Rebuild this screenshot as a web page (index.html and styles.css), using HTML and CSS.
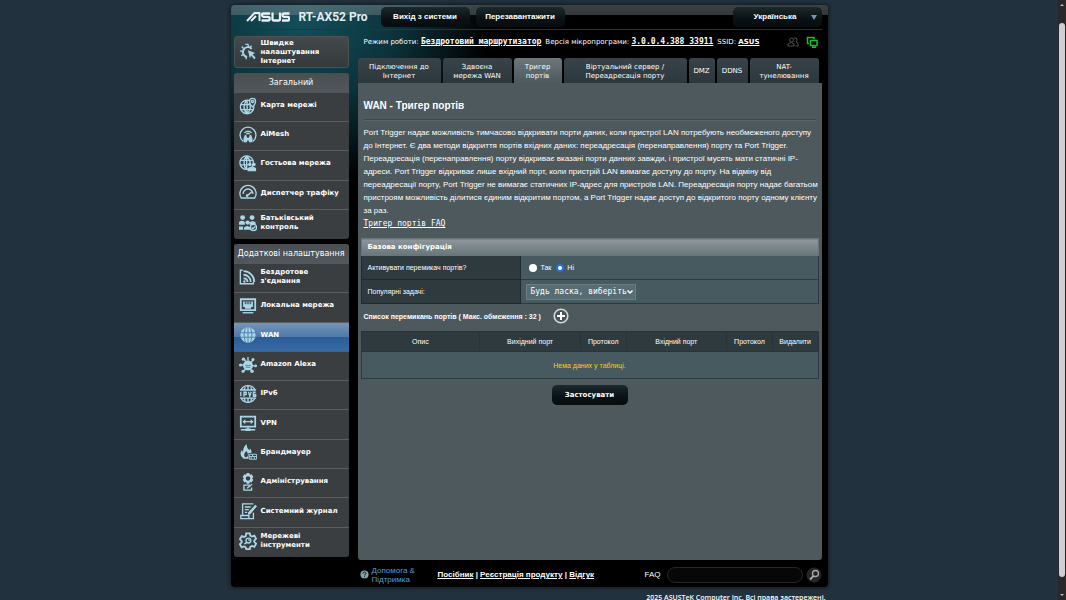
FILE: index.html
```html
<!DOCTYPE html>
<html lang="uk">
<head>
<meta charset="utf-8">
<meta name="viewport" content="width=device-width, initial-scale=1">
<title>RT-AX52 Pro - Тригер портів</title>
<link rel="stylesheet" href="styles.css">
</head>
<body>
<div class="page">
<div class="router">
  <header class="topbar">
    <svg class="logo" viewBox="0 0 44 10" role="img" aria-label="ASUS"><g fill="none" stroke="#e8f0f2" stroke-width="2.300"><path d="M1 9 8.500 1H14M5 9l5-5M13.500 .500V9" stroke-width="2"/><path d="M24 1.500h-6.500q-1.500 0-1.500 1.500t1.500 1.900h4.500q1.700 0 1.700 1.800T22 8.500h-6.500"/><path d="M26.500 .500V7q0 1.500 1.500 1.500h4.500Q34 8.500 34 7V.500"/><path d="M43.500 1.500H38Q36.500 1.500 36.500 3T38 4.900h3.700q1.500 0 1.500 1.800t-1.500 1.800H36"/></g></svg>
    <strong class="model">RT-AX52 Pro</strong>
    <button class="dark-button" type="button">Вихід з системи</button>
    <button class="dark-button" type="button">Перезавантажити</button>
    <button class="dark-button language" type="button">Українська <span class="caret"></span></button>
  </header>
  <div class="columns">
    <nav class="sidebar">
      <a class="menu-item quick" href="#"><svg viewBox="0 0 20 20"><path d="M14 6.500A5.500 5.500 0 1 0 9 15.500" stroke-width="2.200"/><path d="M7 1.500h3l.500 2.500M3 4l2 2M1 9h3M2.500 14l2.500-1.500M8 18v-2.500M14 3l-1.500 2"/><path d="m10 8 8 3-3 1.500 3.500 4-1.500 1.500-3.500-4-1.500 3z" class="fill"/></svg><span>Швидке налаштування Інтернет</span></a>
      <section class="menu">
        <h2>Загальний</h2>
        <div class="menu-list general">
          <a class="menu-item" href="#"><svg viewBox="0 0 20 20"><circle cx="9" cy="11" r="7.500"/><path d="M9 3.500c-4.500 4-4.500 11 0 15 4.500-4 4.500-9 2-12M9 3.500v15M2 8.500h10M2 14h14"/><path class="pin" d="M15 11c-5-5-4-9.500 0-9.500s5 4.500 0 9.500z"/><circle cx="15" cy="5" r="1.200"/></svg><span>Карта мережі</span></a>
          <a class="menu-item" href="#"><svg viewBox="0 0 20 20"><path d="M4.500 17A8.800 8.800 0 1 1 15.500 17M6 7.500q4-3.500 8 0M8 9q2-1.500 4 0"/><path class="fill" d="M5 18v-4l1.500-4h1.500l1 3h2l1-3h1.500l1.500 4v4h-4v-2H9v2z"/></svg><span>AiMesh</span></a>
          <a class="menu-item" href="#"><svg viewBox="0 0 20 20"><circle cx="8.500" cy="8.500" r="7.500"/><path d="M8.500 1c-4 4-4 11 0 15M8.500 1c4 4 4 7 4 8M8.500 1v15M1.500 6h14M1 11h9"/><circle class="fill" cx="12" cy="10.500" r="2"/><circle class="fill" cx="16.500" cy="10.500" r="2"/><path class="fill" d="M9.500 18v-3q2-3 4.500-1 3-2 5 1v3z"/></svg><span>Гостьова мережа</span></a>
          <a class="menu-item" href="#"><svg viewBox="0 0 20 20"><path d="M2.500 15.500A9 9 0 1 1 17.500 15.500zM4.500 11a5.500 5.500 0 0 1 11 0M9 13l5-4"/><circle class="fill" cx="9" cy="13" r="1.500"/></svg><span>Диспетчер трафіку</span></a>
          <a class="menu-item" href="#"><svg viewBox="0 0 20 20"><circle class="fill" cx="4" cy="4" r="2.700"/><circle class="fill" cx="14.500" cy="4" r="2.700"/><circle class="fill" cx="9.500" cy="9.500" r="2.400"/><path class="fill" d="M0 12V9q3-3 6.500 0v3zM11.500 9.500q3.500-3 7 0v2.500h-7zM5.500 17.500V15q3.500-3.500 7 0v2.500zM0 17.500V14h4.500v3.500z"/><circle class="pin" cx="16" cy="15" r="3.500"/><path d="m14 15 1.500 1.500L18 14"/></svg><span>Батьківський контроль</span></a>
        </div>
      </section>
      <section class="menu">
        <h2>Додаткові налаштування</h2>
        <div class="menu-list advanced">
          <a class="menu-item" href="#"><svg viewBox="0 0 20 20"><path d="M4 2.500H1.500v15H16v-2"/><path class="bars" d="M5 3.500A12 12 0 0 1 17 15.500M5 7.500A8 8 0 0 1 13 15.500M5 11.500A4 4 0 0 1 9.500 15.500"/><circle class="fill" cx="6" cy="15" r="1.300"/></svg><span>Бездротове з'єднання</span></a>
          <a class="menu-item" href="#"><svg viewBox="0 0 20 20"><path class="bars" d="M2 2.500h16v12H2z"/><path class="fill" d="M4.500 5h11v6h-2v2h-7v-2h-2z"/><path class="slots" d="M7 5v3M9 5v3M11 5v3M13 5v3"/><path d="M4 17.500h12"/></svg><span>Локальна мережа</span></a>
          <a class="menu-item active" href="#" aria-current="page"><svg viewBox="0 0 20 20"><circle class="fill" cx="10" cy="10" r="8.500"/><path class="cut" d="M10 1v18M1 7.500h18M1 12.500h18M7 2Q4 10 7 18M13 2q3 8 0 16"/></svg><span>WAN</span></a>
          <a class="menu-item" href="#"><svg viewBox="0 0 20 20"><path d="m6 4 2 3M15 5l-2 3M1 10h5M15 11h4M5 17l3-3M14 16l-2-2M10 1v4"/><circle class="fill" cx="10" cy="10.500" r="5.500"/><g class="fill"><circle cx="5" cy="3.500" r="1.900"/><circle cx="15.500" cy="4" r="1.700"/><circle cx="1.700" cy="10" r="1.700"/><circle cx="18.500" cy="11" r="1.500"/><circle cx="4.500" cy="17" r="1.700"/><circle cx="14.500" cy="17" r="1.900"/></g><path class="cut" d="M7 10.500h6M7.500 12.500h5"/></svg><span>Amazon Alexa</span></a>
          <a class="menu-item" href="#"><svg viewBox="0 0 20 20"><path d="M2 6A8.700 8.700 0 0 1 18 6M2 14A8.700 8.700 0 0 0 18 14M1 5.500h18M1 14.500h18M10 1.500v4M10 14.500v4M7 2.500l-1.500 3M13 2.500l1.500 3M5.500 14.500l1.500 3M14.500 14.500l-1.500 3"/><path d="M2 7.500v5M5.500 13V8H8v2.500H5.500M10.500 7.500l1.500 5 1.500-5M18.500 8H16v4.500h2.500v-2H16"/></svg><span>IPv6</span></a>
          <a class="menu-item" href="#"><svg viewBox="0 0 20 20"><path class="bars" d="M2 3h16v11H2z"/><path d="M10 14v3M2 17.500h16M5 8.500h10"/><path class="fill" d="M4 8.500 7 5.500v6zM16 8.500l-3-3v6zM7 16h6v3H7z"/></svg><span>VPN</span></a>
          <a class="menu-item" href="#"><svg viewBox="0 0 20 20"><path class="fill" fill-rule="evenodd" d="M5 17.500Q-.500 13 3 8l1.500 2Q4.500 4 8.500 1q-.500 4 3 7l1-2q2 3 1 5h-3v6.500zM8 9q-3 3-2 5.500Q7 17 9.500 15 11 12 8 9z"/><path d="M11.500 12.500h8v5.500h-8zM11.500 15h8M15 12.500V15M17 15v3M13.500 15v3" stroke-width="1"/></svg><span>Брандмауер</span></a>
          <a class="menu-item" href="#"><svg viewBox="0 0 20 20"><path class="fill" fill-rule="evenodd" d="M8.500 0h3l.500 2 2-.500 2 3-1.500 1.500L16 7.500 14 10.500l-2-.500-.500 2h-3L8 10l-2 .500-2-3L5.500 6 4 4.500l2-3L8 2zM10 3.500a2.500 2.500 0 1 0 .100 0z"/><path d="M12 13.500H5.500V19h8.500v-3M9 17l5.500-4.500"/></svg><span>Адміністрування</span></a>
          <a class="menu-item" href="#"><svg viewBox="0 0 20 20"><path d="M16 2H4v13M2 15h9v3.500H2zM11 18.500h5V12M6.500 5.500H13M6.500 8.500H11M6.500 11.500H9"/><path class="fill" d="m18 3 2 1.700-7.500 8.800-2.800 1 .600-3z"/></svg><span>Системний журнал</span></a>
          <a class="menu-item" href="#"><svg viewBox="0 0 20 20"><path class="bars" d="M8 1.500h4l.500 2.500 2 1 2.500-1 2 3.500-2 2v1.500l2 2-2 3.500-2.500-1-2 1-.500 2.500H8L7.500 17l-2-1-2.500 1-2-3.500 2-2V10l-2-2L3 4.500l2.500 1 2-1z"/><circle cx="10.500" cy="9.500" r="2.700"/><path d="m8.500 11.500-2.500 2M10 9h2"/></svg><span>Мережеві інструменти</span></a>
        </div>
      </section>
    </nav>
    <div class="content">
      <div class="status">
        <span>Режим роботи: <a class="mono" href="#">Бездротовий маршрутизатор</a></span>
        <span>Версія мікропрограми: <a class="mono" href="#">3.0.0.4.388_33911</a></span>
        <span>SSID: <a href="#">ASUS</a></span>
        <span class="status-icons">
          <svg viewBox="0 0 12 12" fill="none" stroke="#4b4e50"><circle cx="4.500" cy="4" r="2"/><path d="M1 10V8q3.500-3 6 0v2zM7 2q3-1 3 2 0 1-1 2 2 0 2 2v2H8.500"/></svg>
          <svg viewBox="0 0 12 12" fill="none" stroke="#15c221" stroke-width="1.500"><path d="M3 7.500H1.500V1.500H8V3M4.500 4.500H11V9.500H4.500zM6 11.200h4"/></svg>
        </span>
      </div>
      <nav class="tabs">
        <a class="tab t1" href="#">Підключення до Інтернет</a>
        <a class="tab t2" href="#">Здвоєна мережа WAN</a>
        <a class="tab t3 current" href="#" aria-current="page">Тригер портів</a>
        <a class="tab t4" href="#">Віртуальний сервер / Переадресація порту</a>
        <a class="tab t5" href="#">DMZ</a>
        <a class="tab t6" href="#">DDNS</a>
        <a class="tab t7" href="#">NAT-тунелювання</a>
      </nav>
      <main class="panel">
        <h1>WAN - Тригер портів</h1>
        <p class="description">Port Trigger надає можливість тимчасово відкривати порти даних, коли пристрої LAN потребують необмеженого доступу до Інтернет. Є два методи відкриття портів вхідних даних: переадресація (перенаправлення) порту та Port Trigger. Переадресація (перенаправлення) порту відкриває вказані порти данних завжди, і пристрої мусять мати статичні IP-адреси. Port Trigger відкриває лише вхідний порт, коли пристрій LAN вимагає доступу до порту. На відміну від переадресації порту, Port Trigger не вимагає статичних IP-адрес для пристроїв LAN. Переадресація порту надає багатьом пристроям можливість ділитися єдиним відкритим портом, а Port Trigger надає доступ до відкритого порту одному клієнту за раз.<br><a class="faq-link" href="#">Тригер портів FAQ</a></p>
        <form>
          <table class="config">
            <thead><tr><th colspan="2">Базова конфігурація</th></tr></thead>
            <tbody>
              <tr><th scope="row">Активувати перемикач портів?</th><td><div class="radios"><input type="radio" name="trigger" id="yes"><label for="yes">Так</label><input type="radio" name="trigger" id="no" checked><label for="no">Ні</label></div></td></tr>
              <tr><th scope="row"><label for="apps">Популярні задачі:</label></th><td><div class="select-wrap"><select id="apps"><option>Будь ласка, виберіть</option></select><svg viewBox="0 0 8 6" fill="none" stroke="#fff" stroke-width="1.500"><path d="m1.500 1.500 2.500 2.500 2.500-2.500"/></svg></div></td></tr>
            </tbody>
          </table>
          <div class="list-title"><span>Список перемикань портів ( Макс. обмеження : 32 )</span><button class="add" type="button" aria-label="Додати"><svg viewBox="0 0 16 16"><circle cx="8" cy="8" r="6.800" fill="#4a5357" stroke="#d5d7d8" stroke-width="1.600"/><path d="M8 4v8M4 8h8" stroke="#fff" stroke-width="2"/></svg></button></div>
          <table class="ports">
            <colgroup><col class="c-name"><col class="c-port"><col class="c-proto"><col class="c-port"><col class="c-proto"><col class="c-proto"></colgroup>
            <thead><tr><th>Опис</th><th>Вихідний порт</th><th>Протокол</th><th>Вхідний порт</th><th>Протокол</th><th>Видалити</th></tr></thead>
            <tbody><tr><td colspan="6">Нема даних у таблиці.</td></tr></tbody>
          </table>
          <button class="dark-button apply" type="button">Застосувати</button>
        </form>
      </main>
    </div>
  </div>
  <footer class="footer">
    <a class="help" href="#"><svg viewBox="0 0 10 10"><circle cx="5" cy="5" r="4.500" fill="#8aa5ab"/><path d="M3.300 4q0-1.700 1.700-1.700T6.700 4Q6.700 5 5 5.500V6M5 7v1" fill="none" stroke="#111b20" stroke-width="1.100"/></svg><span>Допомога &amp; Підтримка</span></a>
    <span class="links"><a href="#">Посібник</a> | <a href="#">Реєстрація продукту</a> | <a href="#">Відгук</a></span>
    <label for="faq">FAQ</label><input id="faq" type="text">
    <button class="search" type="button" aria-label="Пошук"><svg viewBox="0 0 16 16"><circle cx="8" cy="8" r="7.500" fill="#252525"/><circle cx="9.500" cy="6.500" r="3" fill="none" stroke="#aaa" stroke-width="1.300"/><path d="m7.500 9-3.500 3.500" stroke="#aaa" stroke-width="1.800"/></svg></button>
  </footer>
</div>
<p class="copyright">2025 ASUSTeK Computer Inc. Всі права застережені.</p>
</div>
<div class="scrollbar"><i class="arrow up"></i><i class="thumb"></i><i class="arrow down"></i></div>
</body>
</html>
```
FILE: styles.css
```css
* { box-sizing: border-box; }
body {
  margin: 0;
  height: 100vh;
  overflow: hidden;
  display: flex;
  background: #21313d;
  color: #fff;
  font-family: "DejaVu Sans", sans-serif;
  font-size: 7px;
  line-height: 9px;
}
a { color: inherit; }
button, input, select { font: inherit; color: inherit; margin: 0; }
.page { flex: 1; padding: 5px 8px 0; }
.router {
  max-width: 597px;
  margin: 0 auto;
  padding: 0 6px 0 3px;
  border-radius: 4px;
  background:
    linear-gradient(rgba(150, 160, 165, .4), rgba(130, 140, 145, .4)) 0 0 / 100% 10px no-repeat,
    radial-gradient(ellipse 190px 170px at 70px 10px, #14505c 0%, #0c333c 50%, transparent 100%),
    #000;
  box-shadow: 0 0 4px #0b1115;
}
.topbar {
  display: flex;
  align-items: center;
  height: 25px;
  padding-left: 12px;
  border-bottom: 1px solid #27353b;
}
.logo { width: 44px; height: 10px; }
.model {
  width: 82px;
  margin-left: 9px;
  font: bold 12px/14px "Roboto", sans-serif;
  color: #e3ecee;
}
.dark-button {
  min-width: 89px;
  height: 20px;
  padding: 0 8px;
  border: 0;
  border-radius: 5px;
  background: linear-gradient(#1c292d, #0a1114 60%, #070c0e);
  font: bold 8px/10px "Liberation Sans", sans-serif;
}
.topbar .dark-button + .dark-button { margin-left: 6px; }
.topbar .dark-button.language {
  display: flex;
  align-items: center;
  justify-content: flex-end;
  gap: 14px;
  margin-left: auto;
  padding-right: 5px;
}
.caret { border: 3px solid transparent; border-top: 5px solid #7b95ab; border-bottom: 0; }
.columns { display: flex; align-items: stretch; gap: 9px; }
.sidebar { flex: 0 0 115px; padding: 6px 0 3px; }
.content { flex: 1; min-width: 0; display: flex; flex-direction: column; }

.menu { margin-top: 5px; border-radius: 3px; overflow: hidden; background: #3a3e41; }
.menu h2 {
  margin: 0;
  height: 20px;
  background: linear-gradient(#484e51, #52585b);
  font-size: 8px;
  font-weight: normal;
  line-height: 20px;
  text-align: center;
  white-space: nowrap;
}
.menu-list { display: grid; grid-auto-rows: 1fr; }
.general { min-height: 146px; }
.advanced { min-height: 293px; }
.menu-item {
  display: flex;
  align-items: center;
  gap: 4px;
  padding: 0 4px 3px 5px;
  border-bottom: 1px solid #5a5e60;
  font-weight: bold;
  text-decoration: none;
}
.menu-item:last-child { border-bottom: 0; }
.menu-item svg {
  flex: 0 0 18px;
  height: 18px;
  fill: none;
  stroke: #a9d7e8;
  stroke-width: 1.500;
}
.menu-item .fill { fill: #a9d7e8; stroke: none; }
.menu-item .pin { fill: #3a3e41; }
.menu-item .slots { stroke: #3a3e41; stroke-width: 1; }
.menu-item .cut { stroke: #4a7aad; stroke-width: 1; }
.menu-item .bars { stroke-width: 2; }
.menu-item.active { background: linear-gradient(#7594ba, #4f79aa 50%, #2b5b95 50%, #376ba7); }
.menu-item.quick {
  height: 32px;
  padding: 0 20px 0 4px;
  border: 1px solid #4c5254;
  border-radius: 3px;
  background: linear-gradient(#44494b, #34393b);
}

.status { display: flex; align-items: center; gap: 4px; height: 24px; padding-left: 6px; white-space: nowrap; }
.status a { font-weight: bold; }
.status .mono { font-family: "DejaVu Sans Mono", monospace; font-size: 8px; }
.status-icons { display: flex; gap: 7px; margin-left: auto; padding-right: 4px; }
.status-icons svg { width: 12px; height: 12px; }
.tabs { display: flex; gap: 2px; height: 29px; padding: 4px 3px 0 0; }
.tab {
  display: flex;
  align-items: center;
  justify-content: center;
  padding: 2px 3px 0;
  border-radius: 3px 3px 0 0;
  background: linear-gradient(#38444a, #2c373d);
  text-align: center;
  text-decoration: none;
}
.tab.current { background: linear-gradient(#6b777b, #4d595d); }
.t1 { flex: 1 1 83px; }
.t2 { flex: 1 1 69px; padding: 2px 8px 0; }
.t3 { flex: 1 1 48px; }
.t4 { flex: 1 1 123px; padding: 2px 16px 0; }
.t5 { flex: 1 1 26px; }
.t6 { flex: 1 1 31px; }
.t7 { flex: 1 1 69px; }

.panel {
  flex: 1;
  border-radius: 0 0 3px 3px;
  background: #4d595d;
  font-family: "Liberation Sans", sans-serif;
}
h1 {
  margin: 0 6px;
  padding: 17px 0 7px;
  border-bottom: 1px solid #3a474c;
  box-shadow: 0 1px #59666a;
  font-size: 10px;
  line-height: 12px;
}
.description { margin: 6px 0 8px; padding: 0 1px 0 6px; font-size: 8px; line-height: 13px; }
.faq-link { font-family: "DejaVu Sans Mono", monospace; }
form { padding: 0 3px; }
table { width: 100%; border-collapse: collapse; border: 1px solid #2c3a40; }
.config thead th {
  height: 17px;
  padding: 0 6px;
  border: 1px solid #6b7579;
  background: linear-gradient(#8d979b, #68757a);
  font-family: "DejaVu Sans", sans-serif;
  text-align: left;
}
.config tbody th {
  width: 35%;
  padding: 0 6px;
  border: 1px solid #1f2a2f;
  background: #2f3a3e;
  font-weight: normal;
  text-align: left;
}
.config td { height: 24px; padding: 0 5px; border: 1px solid #2c3a40; background: #475a5f; }
.radios { display: flex; align-items: center; gap: 3px; padding-left: 3px; }
.radios input { appearance: none; width: 8px; height: 8px; border-radius: 50%; background: #fff; }
.radios input:checked { border: 2px solid #1b73e8; }
.radios label + input { margin-left: 2px; }
.select-wrap { position: relative; width: 110px; }
.select-wrap select {
  appearance: none;
  width: 100%;
  height: 16px;
  padding: 0 3px;
  border: 1px solid #6d7c81;
  background: #576d73;
  font-family: "DejaVu Sans Mono", monospace;
  font-size: 8px;
}
.select-wrap svg { position: absolute; right: 2px; top: 5px; width: 8px; height: 6px; }
.list-title { display: flex; align-items: center; gap: 12px; height: 27px; padding: 0 3px 3px; font-weight: bold; }
.add, .search { width: 16px; height: 16px; padding: 0; border: 0; background: none; }
.add svg, .search svg { display: block; }
.ports { table-layout: fixed; text-align: center; }
.ports th { height: 20px; padding: 0; border: 1px solid #27343a; background: #2f3a3e; font-weight: normal; }
.ports td { height: 27px; background: #475a5f; color: #fc0; }
.c-name { width: 26%; }
.c-port { width: 22%; }
.c-proto { width: 10%; }
.apply { display: block; min-width: 76px; margin: 6px auto; font: bold 7px/9px "DejaVu Sans", sans-serif; }

.footer { display: flex; align-items: center; height: 27px; padding: 2px 0 0 126px; font-family: "Liberation Sans", sans-serif; font-size: 8px; }
.help { display: flex; align-items: center; gap: 3px; width: 78px; color: #5b9fd0; text-decoration: none; }
.help svg { flex: 0 0 9px; height: 9px; }
.links { flex: 1; font-weight: bold; white-space: nowrap; }
.footer input {
  width: 136px;
  height: 16px;
  margin: 0 3px 0 6px;
  padding: 0 8px;
  border: 1px solid #292725;
  border-radius: 8px;
  background: #070707;
}
.copyright {
  max-width: 597px;
  margin: 6px auto 0;
  padding-right: 2px;
  text-align: right;
  font-weight: 600;
  font-family: "Open Sans", sans-serif;
  white-space: nowrap;
}
.scrollbar {
  display: flex;
  flex-direction: column;
  align-items: center;
  flex: 0 0 8px;
  padding: 4px 0;
  background: #29292a;
}
.thumb { flex: 1; width: 6px; margin: 17px 0; border-radius: 3px; background: #cfcfd1; }
.arrow { border: 2px solid transparent; }
.up { border-top: 0; border-bottom: 2px solid #bbb; }
.down { border-bottom: 0; border-top: 2px solid #bbb; }
```
